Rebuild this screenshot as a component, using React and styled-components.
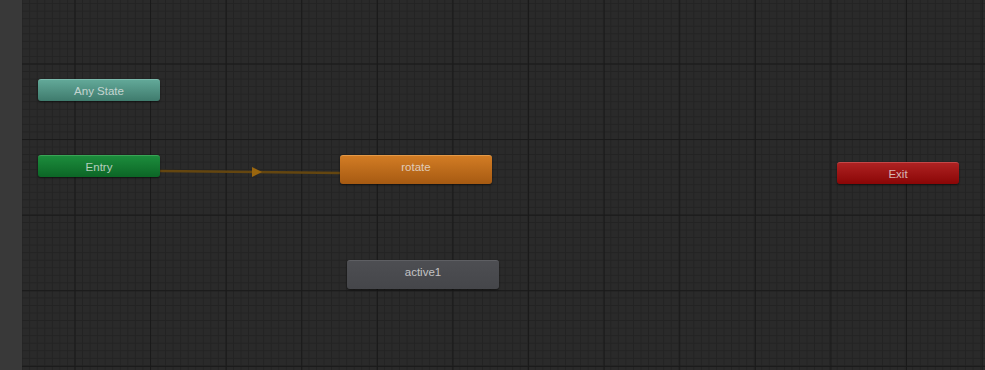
import React from 'react';
import styled, { createGlobalStyle } from 'styled-components';

const GlobalStyle = createGlobalStyle`
  html, body {
    margin: 0;
    padding: 0;
    background: #282828;
    overflow: hidden;
  }
`;

const Window = styled.div`
  display: flex;
  width: 985px;
  height: 370px;
  font-family: "Liberation Sans", Arial, sans-serif;
`;

const SidePanel = styled.div`
  width: 22px;
  flex: none;
  background: #393939;
`;

const Canvas = styled.div`
  position: relative;
  flex: 1;
  overflow: hidden;
  background-color: #2a2a2a;
  background-image:
    linear-gradient(to right, #191919 0, #191919 1.4px, transparent 1.4px),
    linear-gradient(to bottom, #191919 0, #191919 1.4px, transparent 1.4px),
    linear-gradient(to right, #232323 0, #232323 1px, transparent 1px),
    linear-gradient(to bottom, #232323 0, #232323 1px, transparent 1px);
  background-size: 75.6px 75.6px, 75.6px 75.6px, 7.56px 7.56px, 7.56px 7.56px;
  background-position: 52.5px 0, 0 63.5px, 52.5px 0, 0 63.5px;
`;

const palettes = {
  any: ['#62a898', '#3f7b6d', '#7cbcae'],
  entry: ['#1c8c3c', '#0c6626', '#3aa456'],
  state: ['#d27c24', '#a65a12', '#e49a48'],
  idle: ['#4d4e52', '#45464a', '#5e5f63'],
  exit: ['#ae2222', '#8a0606', '#c44848'],
};

const Node = styled.div`
  position: absolute;
  box-sizing: border-box;
  display: flex;
  justify-content: center;
  padding-top: 5px;
  border-radius: 3px;
  border-top: 1px solid ${p => palettes[p.$kind][2]};
  background: linear-gradient(to bottom, ${p => palettes[p.$kind][0]}, ${p => palettes[p.$kind][1]});
  box-shadow: 0 1px 2px rgba(0, 0, 0, 0.55);
  color: rgba(235, 235, 235, 0.76);
  font-size: 11.5px;
  line-height: 13px;
`;

const Transitions = styled.svg`
  position: absolute;
  left: 0;
  top: 0;
  pointer-events: none;
`;

const nodes = [
  { id: 'any', label: 'Any State', kind: 'any', x: 16, y: 79, w: 122, h: 22 },
  { id: 'entry', label: 'Entry', kind: 'entry', x: 16, y: 155, w: 122, h: 22 },
  { id: 'rotate', label: 'rotate', kind: 'state', x: 318, y: 155, w: 152, h: 29 },
  { id: 'active1', label: 'active1', kind: 'idle', x: 325, y: 260, w: 152, h: 29 },
  { id: 'exit', label: 'Exit', kind: 'exit', x: 815, y: 162, w: 122, h: 22 },
];

export default function App() {
  return (
    <Window>
      <GlobalStyle />
      <SidePanel />
      <Canvas>
        <Transitions width="963" height="370">
          <line x1="138" y1="171" x2="318" y2="173" stroke="#644610" strokeWidth="2.5" />
          <polygon points="230,167 240,172 230,177" fill="#9a660e" />
        </Transitions>
        {nodes.map(n => (
          <Node
            key={n.id}
            $kind={n.kind}
            style={{ left: n.x, top: n.y, width: n.w, height: n.h }}
          >
            {n.label}
          </Node>
        ))}
      </Canvas>
    </Window>
  );
}
